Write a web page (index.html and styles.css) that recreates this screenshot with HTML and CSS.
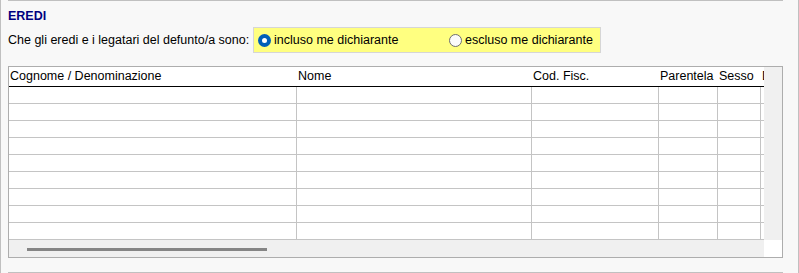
FILE: index.html
```html
<!DOCTYPE html>
<html lang="it">

<head>
  <meta charset="UTF-8">
  <meta name="viewport" content="width=device-width, initial-scale=1.0">
  <title>Eredi</title>
  <link rel="stylesheet" href="styles.css">
</head>

<body>
  <div class="page">
    <div class="section">
      <div class="title">EREDI</div>
      <div class="choice-row">
        <span class="label">Che gli eredi e i legatari del defunto/a sono:</span>
        <div class="choice-box">
          <label class="option first"><span class="radio checked"></span>incluso me dichiarante</label>
          <label class="option"><span class="radio"></span>escluso me dichiarante</label>
        </div>
      </div>

      <!-- griglia eredi -->
      <div class="grid">
        <div class="viewport">
          <div class="row head">
            <div class="cell">Cognome / Denominazione</div>
            <div class="cell">Nome</div>
            <div class="cell">Cod. Fisc.</div>
            <div class="cell">Parentela</div>
            <div class="cell">Sesso</div>
            <div class="cell">Data nascita</div>
          </div>
          <div class="row"><div class="cell"></div><div class="cell"></div><div class="cell"></div><div class="cell"></div><div class="cell"></div><div class="cell"></div></div>
          <div class="row"><div class="cell"></div><div class="cell"></div><div class="cell"></div><div class="cell"></div><div class="cell"></div><div class="cell"></div></div>
          <div class="row"><div class="cell"></div><div class="cell"></div><div class="cell"></div><div class="cell"></div><div class="cell"></div><div class="cell"></div></div>
          <div class="row"><div class="cell"></div><div class="cell"></div><div class="cell"></div><div class="cell"></div><div class="cell"></div><div class="cell"></div></div>
          <div class="row"><div class="cell"></div><div class="cell"></div><div class="cell"></div><div class="cell"></div><div class="cell"></div><div class="cell"></div></div>
          <div class="row"><div class="cell"></div><div class="cell"></div><div class="cell"></div><div class="cell"></div><div class="cell"></div><div class="cell"></div></div>
          <div class="row"><div class="cell"></div><div class="cell"></div><div class="cell"></div><div class="cell"></div><div class="cell"></div><div class="cell"></div></div>
          <div class="row"><div class="cell"></div><div class="cell"></div><div class="cell"></div><div class="cell"></div><div class="cell"></div><div class="cell"></div></div>
          <div class="row"><div class="cell"></div><div class="cell"></div><div class="cell"></div><div class="cell"></div><div class="cell"></div><div class="cell"></div></div>
        </div>
        <div class="vscroll"></div>
        <div class="hscroll"><div class="thumb"></div></div>
        <div class="corner"></div>
      </div>
    </div>
  </div>
</body>

</html>
```

FILE: styles.css
```css
* {
  box-sizing: border-box;
}

body {
  margin: 0;
  padding: 0;
  font-family: "Liberation Sans", Arial, sans-serif;
  font-size: 12.5px;
  color: #000;
  background-color: #f8f8f8;
}

.page {
  height: 273px;
  border-left: 1px solid #c0c0c0;
  border-right: 1px solid #c0c0c0;
  overflow: hidden;
}

.section {
  height: 273px;
  margin: 0 15px 0 7px;
  border-top: 1px solid #c0c0c0;
  border-bottom: 1px solid #c0c0c0;
  padding-top: 7px;
}

.title {
  font-weight: bold;
  color: #000080;
  line-height: 16px;
}

.choice-row {
  display: flex;
  align-items: center;
  margin-top: 3px;
  height: 26px;
}

.label {
  width: 245px;
  white-space: nowrap;
}

.choice-box {
  display: flex;
  align-items: center;
  width: 348px;
  height: 26px;
  padding: 0 4px;
  background-color: #ffff80;
  border: 1px solid #d6d6d6;
}

.option {
  display: flex;
  align-items: center;
  gap: 3px;
  white-space: nowrap;
}

.option.first {
  width: 191px;
}

.radio {
  position: relative;
  flex: none;
  width: 13px;
  height: 13px;
  border-radius: 50%;
  border: 1px solid #6e6e6e;
  background-color: #fbfbfb;
}

.radio.checked {
  border: none;
  background-color: #005fb8;
}

.radio.checked::after {
  content: "";
  position: absolute;
  left: 4px;
  top: 4px;
  width: 5px;
  height: 5px;
  border-radius: 50%;
  background-color: #fff;
}

.grid {
  display: grid;
  grid-template-columns: 755px 18px;
  grid-template-rows: 173px 17px;
  width: 775px;
  margin-top: 13px;
  border: 1px solid #adadad;
  background-color: #fff;
}

.viewport {
  overflow: hidden;
}

.row {
  display: grid;
  grid-template-columns: 288px 235px 127px 59px 43px 90px;
  height: 17px;
  border-bottom: 1px solid #c4c4c4;
}

.row .cell {
  border-right: 1px solid #c4c4c4;
  white-space: nowrap;
  overflow: hidden;
}

.row.head {
  height: 20px;
  border-bottom: 1px solid #000;
}

.row.head .cell {
  border-right: none;
  padding-left: 1px;
  line-height: 19px;
}

.vscroll {
  background-color: #f0f0f0;
}

.hscroll {
  background-color: #f0f0f0;
  padding: 8px 0 0 18px;
}

.thumb {
  width: 240px;
  height: 3px;
  background-color: #858585;
}

.corner {
  background-color: #fff;
}
```
